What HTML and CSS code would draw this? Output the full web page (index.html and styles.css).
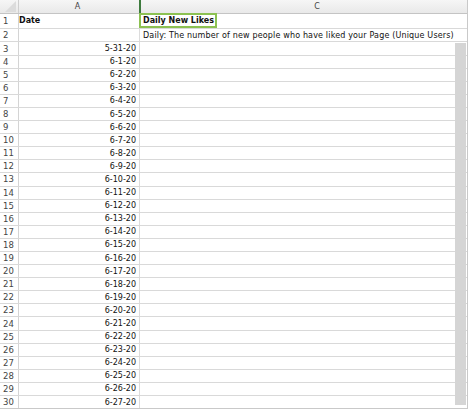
FILE: index.html
```html
<!DOCTYPE html>
<html>
<head>
<meta charset="utf-8">
<link rel="stylesheet" href="styles.css">
</head>
<body>
<div class="sheet">
  <div class="row head">
    <div class="num corner"><span class="tri"></span></div>
    <div class="cell a center">A</div>
    <div class="cell c center">C</div>
  </div>
  <div class="row r1">
    <div class="num">1</div>
    <div class="cell a bold">Date</div>
    <div class="cell c bold"><span class="sel">Daily New Likes</span></div>
  </div>
  <div class="row r2">
    <div class="num">2</div>
    <div class="cell a"></div>
    <div class="cell c desc">Daily: The number of new people who have liked your Page (Unique Users)</div>
  </div>
  <div class="row"><div class="num">3</div><div class="cell a right">5-31-20</div><div class="cell c"></div></div>
  <div class="row"><div class="num">4</div><div class="cell a right">6-1-20</div><div class="cell c"></div></div>
  <div class="row"><div class="num">5</div><div class="cell a right">6-2-20</div><div class="cell c"></div></div>
  <div class="row"><div class="num">6</div><div class="cell a right">6-3-20</div><div class="cell c"></div></div>
  <div class="row"><div class="num">7</div><div class="cell a right">6-4-20</div><div class="cell c"></div></div>
  <div class="row"><div class="num">8</div><div class="cell a right">6-5-20</div><div class="cell c"></div></div>
  <div class="row"><div class="num">9</div><div class="cell a right">6-6-20</div><div class="cell c"></div></div>
  <div class="row"><div class="num">10</div><div class="cell a right">6-7-20</div><div class="cell c"></div></div>
  <div class="row"><div class="num">11</div><div class="cell a right">6-8-20</div><div class="cell c"></div></div>
  <div class="row"><div class="num">12</div><div class="cell a right">6-9-20</div><div class="cell c"></div></div>
  <div class="row"><div class="num">13</div><div class="cell a right">6-10-20</div><div class="cell c"></div></div>
  <div class="row"><div class="num">14</div><div class="cell a right">6-11-20</div><div class="cell c"></div></div>
  <div class="row"><div class="num">15</div><div class="cell a right">6-12-20</div><div class="cell c"></div></div>
  <div class="row"><div class="num">16</div><div class="cell a right">6-13-20</div><div class="cell c"></div></div>
  <div class="row"><div class="num">17</div><div class="cell a right">6-14-20</div><div class="cell c"></div></div>
  <div class="row"><div class="num">18</div><div class="cell a right">6-15-20</div><div class="cell c"></div></div>
  <div class="row"><div class="num">19</div><div class="cell a right">6-16-20</div><div class="cell c"></div></div>
  <div class="row"><div class="num">20</div><div class="cell a right">6-17-20</div><div class="cell c"></div></div>
  <div class="row"><div class="num">21</div><div class="cell a right">6-18-20</div><div class="cell c"></div></div>
  <div class="row"><div class="num">22</div><div class="cell a right">6-19-20</div><div class="cell c"></div></div>
  <div class="row"><div class="num">23</div><div class="cell a right">6-20-20</div><div class="cell c"></div></div>
  <div class="row"><div class="num">24</div><div class="cell a right">6-21-20</div><div class="cell c"></div></div>
  <div class="row"><div class="num">25</div><div class="cell a right">6-22-20</div><div class="cell c"></div></div>
  <div class="row"><div class="num">26</div><div class="cell a right">6-23-20</div><div class="cell c"></div></div>
  <div class="row"><div class="num">27</div><div class="cell a right">6-24-20</div><div class="cell c"></div></div>
  <div class="row"><div class="num">28</div><div class="cell a right">6-25-20</div><div class="cell c"></div></div>
  <div class="row"><div class="num">29</div><div class="cell a right">6-26-20</div><div class="cell c"></div></div>
  <div class="row"><div class="num">30</div><div class="cell a right">6-27-20</div><div class="cell c"></div></div>
  <div class="scrollbar"></div>
</div>
</body>
</html>
```
FILE: styles.css
```css
html, body {
  margin: 0;
  padding: 0;
  background: #ffffff;
}
.sheet {
  position: relative;
  width: 467px;
  height: 408px;
  border-right: 1px solid #c9c9c9;
  border-bottom: 1px solid #c9c9c9;
  overflow: hidden;
  font-family: "DejaVu Sans", Verdana, sans-serif;
  font-size: 8px;
  color: #111;
  background: #fff;
}
.row {
  display: flex;
  height: 13.1px;
  box-sizing: border-box;
  border-bottom: 1px solid #d9d9d9;
}
.row.head {
  height: 14px;
  background: linear-gradient(#f6f6f6, #e9e9e9);
  border-bottom: 1px solid #c4c4c4;
  color: #444;
}
.row.r1 { height: 14.6px; }
.row.r2 { height: 13.9px; }
.num {
  width: 19px;
  flex: none;
  box-sizing: border-box;
  border-right: 1px solid #d4d4d4;
  padding-left: 3px;
  color: #444;
  display: flex;
  align-items: center;
  font-size: 8.5px;
}
.corner {
  position: relative;
  border-right: 1px solid #cfcfcf;
}
.tri {
  position: absolute;
  right: 2px;
  bottom: 1px;
  width: 0;
  height: 0;
  border-left: 11px solid transparent;
  border-bottom: 11px solid #dcdcdc;
}
.cell {
  display: flex;
  align-items: center;
  box-sizing: border-box;
  white-space: nowrap;
  overflow: visible;
}
.cell.a {
  width: 121px;
  flex: none;
  border-right: 1px solid #dcdcdc;
  padding-right: 3px;
}
.head .cell.a {
  border-right: 2px solid #3e7a3e;
  width: 122px;
}
.cell.c {
  flex: none;
  width: 352px;
  padding-left: 3px;
}
.cell.desc {
  letter-spacing: 0.16px;
}
.head .cell.c { padding-left: 0; }
.center { justify-content: center; }
.right { justify-content: flex-end; }
.bold { font-weight: bold; }
.r1 .cell.c { padding-left: 0; position: relative; }
.sel {
  display: flex;
  align-items: center;
  height: 15px;
  width: 78px;
  box-sizing: border-box;
  border: 2px solid #8cc152;
  padding-left: 2px;
  margin-left: -1px;
}
.scrollbar {
  position: absolute;
  left: 455px;
  top: 43px;
  width: 11px;
  height: 362px;
  background: #d5d5d5;
}
```
